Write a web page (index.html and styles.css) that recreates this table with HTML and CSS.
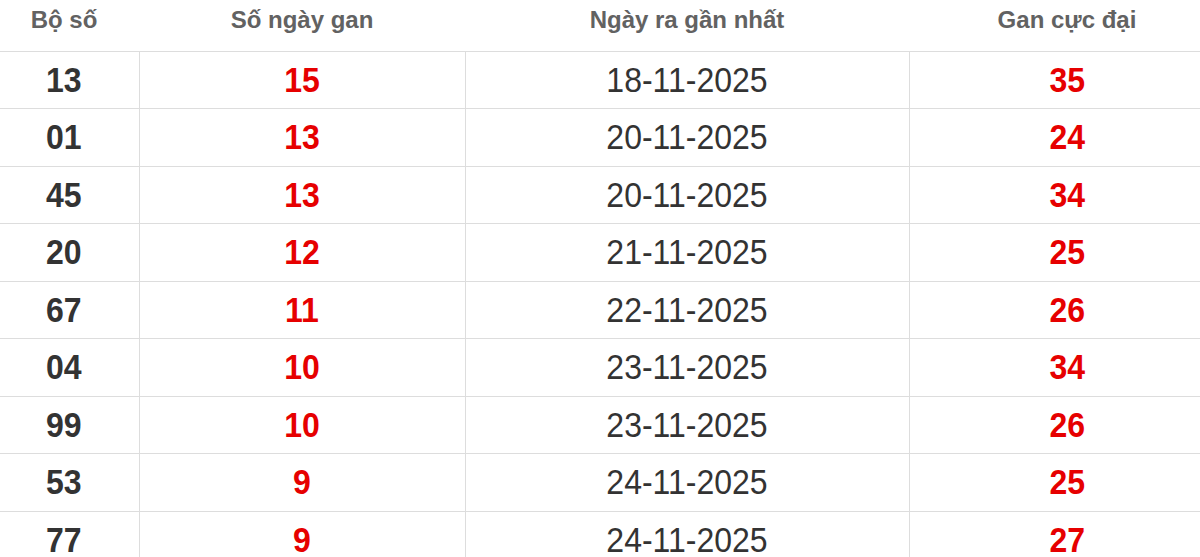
FILE: index.html
```html
<!DOCTYPE html>
<html lang="vi">
<head>
<meta charset="utf-8">
<title>Lô gan</title>
<link rel="stylesheet" href="styles.css">
</head>
<body>
<table class="gan">
  <colgroup>
    <col class="c1"><col class="c2"><col class="c3"><col class="c4">
  </colgroup>
  <thead>
    <tr><th>Bộ số</th><th>Số ngày gan</th><th>Ngày ra gần nhất</th><th>Gan cực đại</th></tr>
  </thead>
  <tbody>
    <tr><td class="num"><span class="v">13</span></td><td class="red"><span class="v">15</span></td><td class="date"><span class="v">18-11-2025</span></td><td class="red"><span class="v">35</span></td></tr>
    <tr><td class="num"><span class="v">01</span></td><td class="red"><span class="v">13</span></td><td class="date"><span class="v">20-11-2025</span></td><td class="red"><span class="v">24</span></td></tr>
    <tr><td class="num"><span class="v">45</span></td><td class="red"><span class="v">13</span></td><td class="date"><span class="v">20-11-2025</span></td><td class="red"><span class="v">34</span></td></tr>
    <tr><td class="num"><span class="v">20</span></td><td class="red"><span class="v">12</span></td><td class="date"><span class="v">21-11-2025</span></td><td class="red"><span class="v">25</span></td></tr>
    <tr><td class="num"><span class="v">67</span></td><td class="red"><span class="v">11</span></td><td class="date"><span class="v">22-11-2025</span></td><td class="red"><span class="v">26</span></td></tr>
    <tr><td class="num"><span class="v">04</span></td><td class="red"><span class="v">10</span></td><td class="date"><span class="v">23-11-2025</span></td><td class="red"><span class="v">34</span></td></tr>
    <tr><td class="num"><span class="v">99</span></td><td class="red"><span class="v">10</span></td><td class="date"><span class="v">23-11-2025</span></td><td class="red"><span class="v">26</span></td></tr>
    <tr><td class="num"><span class="v">53</span></td><td class="red"><span class="v">9</span></td><td class="date"><span class="v">24-11-2025</span></td><td class="red"><span class="v">25</span></td></tr>
    <tr><td class="num"><span class="v">77</span></td><td class="red"><span class="v">9</span></td><td class="date"><span class="v">24-11-2025</span></td><td class="red"><span class="v">27</span></td></tr>
  </tbody>
</table>
</body>
</html>
```
FILE: styles.css
```css
html, body {
  margin: 0;
  padding: 0;
  background: #fff;
  overflow: hidden;
}

body {
  font-family: "Liberation Sans", Arial, sans-serif;
}

.gan {
  border-collapse: collapse;
  table-layout: fixed;
  width: 1236px;
  margin-left: -11px;
}

.c1 { width: 150px; }
.c2 { width: 326px; }
.c3 { width: 444px; }
.c4 { width: 316px; }

.gan th {
  height: 51px;
  padding: 6px 0 0;
  box-sizing: border-box;
  vertical-align: top;
  font-size: 24px;
  line-height: 27px;
  font-weight: bold;
  color: #626262;
  text-align: center;
  border-bottom: 1px solid #ddd;
}

.gan td {
  height: 56.5px;
  padding: 0;
  text-align: center;
  vertical-align: middle;
  font-size: 32px;
  line-height: 36px;
  color: #333;
  border-bottom: 1px solid #ddd;
}

.gan td + td {
  border-left: 1px solid #ddd;
}

.v {
  display: inline-block;
  transform: scaleY(1.1);
}

.num { font-weight: bold; }
.red { font-weight: bold; color: #e60000 !important; }
.date { font-weight: normal; }
```
